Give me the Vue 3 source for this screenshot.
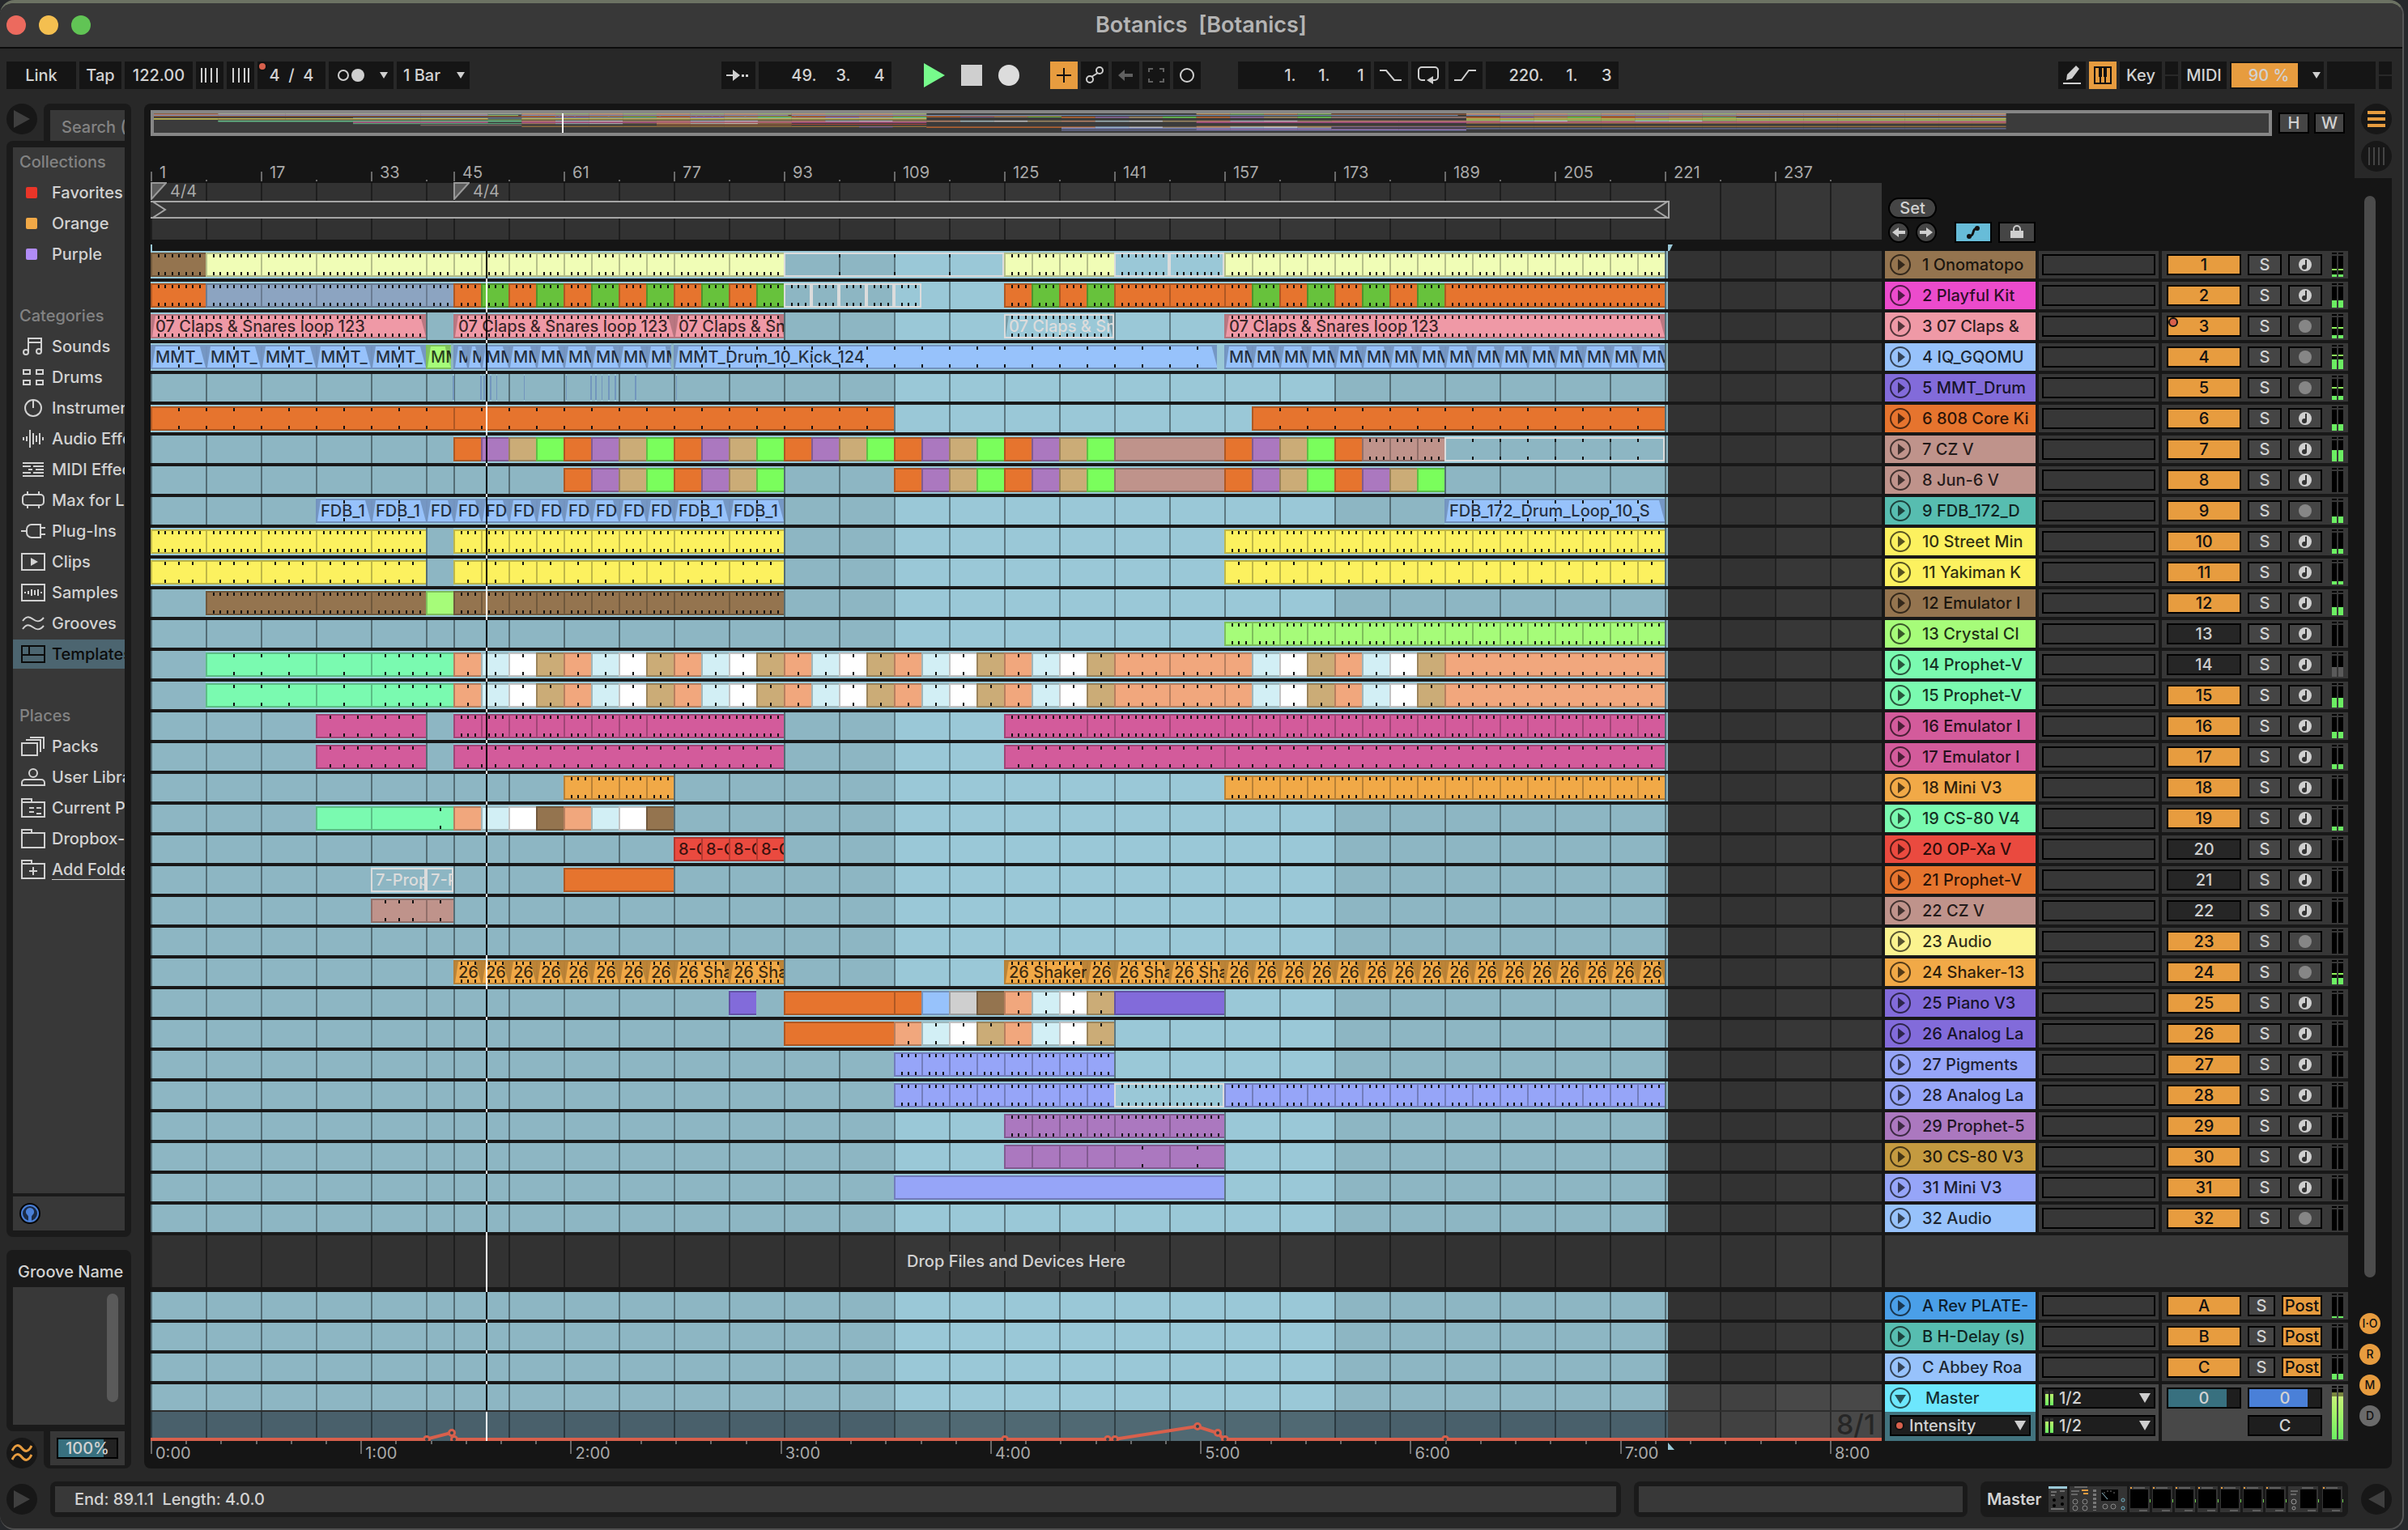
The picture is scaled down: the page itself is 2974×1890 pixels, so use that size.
<template>
  <div class="window">
    <header class="titlebar">
      <div class="lights">
        <span class="light red"></span>
        <span class="light amber"></span>
        <span class="light green"></span>
      </div>
      <h1>Botanics&nbsp; [Botanics]</h1>
    </header>

    <!-- Control bar -->
    <div class="toolbar">
      <div class="group">
        <button class="box w86">Link</button>
        <button class="box w52">Tap</button>
        <input class="box w84" value="122.00" aria-label="Tempo">
        <button class="box w34" aria-label="Nudge down">
          <svg width="24" height="18"><path class="line" d="M2 0v18M7 0v18M14 0v18M21 0v18" /></svg>
        </button>
        <button class="box w34" aria-label="Nudge up">
          <svg width="24" height="18"><path class="line" d="M3 0v18M10 0v18M17 0v18M22 0v18" /></svg>
        </button>
        <button class="box w84 signature"><span class="auto-dot"></span>4&nbsp; /&nbsp; 4</button>
        <button class="box w80" aria-label="Metronome">
          <svg width="68" height="20">
            <circle class="line" cx="12" cy="10" r="6" />
            <circle class="solid" cx="30" cy="10" r="8" />
            <path class="solid" d="M57 6h10l-5 8z" />
          </svg>
        </button>
        <span class="select-wrap w90">
          <select class="box" aria-label="Quantization"><option>1 Bar</option></select>
          <svg width="10" height="8"><path class="solid" d="M0 0h10l-5 8z" /></svg>
        </span>
      </div>
      <div class="space-a"></div>
      <div class="group">
        <button class="box w42" aria-label="Follow">
          <svg width="30" height="20"><path class="solid" d="M0 9h8V3l9 7-9 7v-6H0zM19 9h3v3h-3zM24 9h3v3h-3z" /></svg>
        </button>
        <div class="box position">
          <input v-for="(part, i) in ['49.', '3.', '4']" :key="i" :value="part" aria-label="Arrangement position">
        </div>
      </div>
      <div class="group transport">
        <button aria-label="Play"><svg width="26" height="30"><path fill="#77fb8c" d="M0 0l26 15L0 30z" /></svg></button>
        <button aria-label="Stop"><svg width="26" height="26"><path class="solid" d="M0 0h26v26H0z" /></svg></button>
        <button aria-label="Record"><svg width="26" height="26"><circle cx="13" cy="13" r="13" fill="#dcdcdc" /></svg></button>
      </div>
      <div class="group">
        <button class="box w34 on" aria-label="Overdub"><svg width="18" height="18"><path d="M9 0v18M0 9h18" stroke="#111" stroke-width="2" /></svg></button>
        <button class="box w34" aria-label="Automation arm"><svg width="24" height="24"><path class="line" d="M8 14l8-5" /><circle class="line" cx="6" cy="17" r="4" /><circle class="line" cx="18" cy="6" r="4" /></svg></button>
        <button class="box w34" aria-label="Re-enable automation"><svg width="18" height="16"><path d="M0 8l8-7v5h10v4H8v5z" fill="#606060" /></svg></button>
        <button class="box w34" aria-label="Capture"><svg width="20" height="20"><path d="M1 6V2h5M14 2h5v4M19 14v4h-5M6 18H1v-4" fill="none" stroke="#606060" stroke-width="2" /></svg></button>
        <button class="box w34" aria-label="Session record"><svg width="20" height="20"><circle class="line" cx="10" cy="10" r="8" /></svg></button>
      </div>
      <div class="group loop-group">
        <div class="box position">
          <input v-for="(part, i) in ['1.', '1.', '1']" :key="i" :value="part" aria-label="Loop start">
        </div>
        <button class="box w42" aria-label="Punch in"><svg width="28" height="16"><path class="line" d="M0 2h8l10 12h9" /></svg></button>
        <button class="box w42" aria-label="Loop"><svg width="28" height="24"><path class="line" d="M10 18H6a4 4 0 0 1-4-4V6a4 4 0 0 1 4-4h16a4 4 0 0 1 4 4v8a4 4 0 0 1-4 4h-4" /><path class="solid" d="M12 18l8-5v10z" /></svg></button>
        <button class="box w42" aria-label="Punch out"><svg width="28" height="16"><path class="line" d="M0 14h9L18 2h9" /></svg></button>
        <div class="box position">
          <input v-for="(part, i) in ['220.', '1.', '3']" :key="i" :value="part" aria-label="Loop length">
        </div>
      </div>
      <div class="space-b"></div>
      <div class="group">
        <button class="box w34" aria-label="Draw mode"><svg width="24" height="24"><path class="solid" d="M5 18l1-7L17 0l4 4-9 12zM1 21h22v2H1z" /></svg></button>
        <button class="box w34 on" aria-label="Computer keyboard">
          <svg width="24" height="24"><path d="M2 2h20v20H2zM9 13v9M15 13v9" fill="none" stroke="#111" stroke-width="2" /><path d="M7 2h4v12H7zM13 2h4v12h-4z" fill="#111" /></svg>
        </button>
        <button class="box w52">Key</button>
        <span class="box w16 split"></span>
        <button class="box w56">MIDI</button>
        <button class="box cpu"><span>90 %</span><svg width="10" height="8"><path class="solid" d="M0 0h10l-5 8z" /></svg></button>
        <span class="box w60"></span>
        <span class="box w16 split"></span>
      </div>
    </div>

    <div class="body">
      <!-- Browser -->
      <aside class="sidebar">
        <div class="browser-top">
          <button class="round" aria-label="Toggle browser"><svg width="24" height="24"><path d="M2 1l20 11L2 23z" fill="#3f3f3f" /></svg></button>
          <div class="search"><input type="text" placeholder="Search (Cmd + F)" aria-label="Search"></div>
        </div>
        <nav class="browser">
          <div class="browser-list">
            <template v-for="section in sections" :key="section.title">
              <h2>{{ section.title }}</h2>
              <ul>
                <li v-for="item in section.items" :key="item.label">
                  <button :class="{ selected: item.selected, underline: item.add }">
                    <span v-if="item.color" class="swatch" :style="{ background: item.color }"></span>
                    <svg v-else width="30" height="24">
                      <path :d="icons[item.icon]" fill="none" stroke="currentColor" stroke-width="2" />
                      <path v-if="item.icon === 'clips'" d="M12 7l9 5-9 5z" fill="currentColor" />
                    </svg>
                    <span class="item-label">{{ item.label }}</span>
                  </button>
                </li>
              </ul>
            </template>
          </div>
          <div class="browser-foot">
            <button aria-label="Preview">
              <svg width="26" height="26"><circle cx="13" cy="13" r="13" fill="#060606" /><circle cx="13" cy="13" r="10" fill="#1b2b45" stroke="#4a80d8" stroke-width="2" /><path d="M13 6a5 5 0 0 1 5 6c0 2-3 3-3 5v6h-4v-6c0-2-3-3-3-5a5 5 0 0 1 5-6z" fill="#4a80d8" /></svg>
            </button>
          </div>
        </nav>
        <section class="groove">
          <h2>Groove Name</h2>
          <div class="groove-list"><span class="groove-scroll"></span></div>
        </section>
        <div class="groove-foot">
          <button class="round" aria-label="Groove pool">
            <svg width="26" height="26"><path d="M1 10c4-8 8-8 12-3s8 5 12-3M1 21c4-8 8-8 12-3s8 5 12-3" fill="none" stroke="#e79c3f" stroke-width="3" /></svg>
          </button>
          <div class="amount"><button>100%</button></div>
        </div>
      </aside>

      <!-- Arrangement -->
      <main class="deck">
        <div class="switcher">
          <button class="round" aria-label="Arrangement view"><svg width="22" height="20"><path d="M0 0h22v4H0zM0 8h22v4H0zM0 16h22v4H0z" fill="#e79c3f" /></svg></button>
          <button class="round" aria-label="Session view"><svg width="22" height="22"><path d="M2 0v22M8 0v22M14 0v22M20 0v22" stroke="#444" stroke-width="2" /></svg></button>
        </div>

        <div class="overview-row">
          <div class="overview">
            <svg :viewBox="`0 0 ${TOTAL} 35`" preserveAspectRatio="none">
              <template v-for="(track, t) in tracks" :key="t">
                <rect v-for="(clip, c) in track.clips.filter(k => !k.ghost)" :key="c" :x="clip.start - 1" :y="t" :width="clip.end - clip.start" height="1.2" :fill="clip.color" />
              </template>
            </svg>
            <span class="overview-head" :style="{ left: pct(PLAYHEAD) }"></span>
          </div>
          <button class="small-box">H</button>
          <button class="small-box">W</button>
        </div>

        <div class="top">
          <div class="top-ruler">
            <div class="numbers">
              <span v-for="b in minorBars" :key="'m' + b" class="minor" :style="{ left: pct(b - 1) }"></span>
              <span v-for="b in rulerBars" :key="b" class="major" :style="{ left: pct(b - 1) }"><em>{{ b }}</em></span>
            </div>
            <div class="scrub" :style="{ background: darkShade }">
              <svg class="grid" :viewBox="`0 0 ${TOTAL} 10`" preserveAspectRatio="none"><path :d="gridPath" class="grid-dark" /></svg>
              <span v-for="b in [1, 45]" :key="b" class="time-sig" :style="{ left: pct(b - 1) }">
                <svg width="20" height="22"><path d="M1 1h18L1 21z" fill="#5c5c5c" stroke="#999" stroke-width="2" /></svg>4/4
              </span>
              <div class="loop" :style="{ width: pct(220.7) }">
                <svg width="20" height="22"><path d="M1 0l17 11L1 22" /></svg>
                <svg width="20" height="22"><path d="M19 0L2 11l17 11z" /></svg>
              </div>
            </div>
            <div class="insert">
              <span class="insert-start"></span>
              <svg width="6" height="8" :style="{ left: pct(220.5) }"><path d="M0 0h6l-4 8H0z" fill="#9ac8d7" /></svg>
            </div>
          </div>
          <div class="set-tools">
            <button class="pill">Set</button>
            <div>
              <button class="mini-round" aria-label="Previous locator"><svg width="16" height="14"><path class="solid" d="M0 7l8-6v4h8v4H8v4z" /></svg></button>
              <button class="mini-round" aria-label="Next locator"><svg width="16" height="14"><path class="solid" d="M16 7L8 1v4H0v4h8v4z" /></svg></button>
              <button class="tool automation" aria-label="Automation mode"><svg width="18" height="18"><path d="M4 14C12 13 6 5 14 4" fill="none" stroke="#111" stroke-width="3" /><circle cx="4" cy="14" r="3" fill="#111" /><circle cx="14" cy="4" r="3" fill="#111" /></svg></button>
              <button class="tool" aria-label="Lock envelopes"><svg width="16" height="18"><path d="M4 8V5a4 4 0 0 1 8 0v3" fill="none" stroke="#ccc" stroke-width="2" /><path class="solid" d="M0 7h16v9H0z" /></svg></button>
            </div>
          </div>
        </div>

        <div class="rows">
          <div class="playhead-track"><span class="head-line" :style="{ left: pct(PLAYHEAD) }"></span></div>

          <div v-for="(track, t) in tracks" :key="t" class="row">
            <div class="lane" :style="{ background: blueShade }">
              <svg class="grid" :viewBox="`0 0 ${TOTAL} 10`" preserveAspectRatio="none"><path :d="gridPath" /></svg>
              <div
                v-for="(clip, c) in track.clips"
                :key="c"
                class="clip"
                :class="{ ghost: clip.ghost, fades: clip.fades, sliver: clip.sliver }"
                :style="{ left: pct(clip.start - 1), width: pct(clip.end - clip.start), backgroundColor: clip.color }"
              ><span v-if="clip.label">{{ clip.label }}</span></div>
              <svg class="ticks" :viewBox="`0 0 ${TOTAL} 30`" preserveAspectRatio="none"><path :d="tickPath(track.clips)" /></svg>
              <span class="head-line" :class="{ black: !track.lightHead }" :style="{ left: pct(PLAYHEAD) }"></span>
            </div>
            <div class="name" :style="{ background: track.color }">
              <button class="fold" aria-label="Unfold track"><svg width="26" height="26"><circle cx="13" cy="13" r="12" /><path d="M10 6l9 7-9 7z" /></svg></button>
              <span>{{ t + 1 }} {{ track.name }}</span>
            </div>
            <div class="io"><span class="slot"></span></div>
            <div class="mix">
              <button class="activator" :class="{ off: track.off }">{{ t + 1 }}<i v-if="t === 2" class="auto-dot"></i></button>
              <button class="square">S</button>
              <button class="square" aria-label="Arm">
                <svg width="16" height="16">
                  <circle cx="8" cy="8" r="8" :fill="track.audio ? '#868686' : '#cfcfcf'" />
                  <path v-if="!track.audio" d="M9 2v9" stroke="#333" stroke-width="2" /><circle v-if="!track.audio" cx="7" cy="11" r="3" fill="#333" />
                </svg>
              </button>
              <span class="meters">
                <i v-for="ch in 2" :key="ch"><b :class="{ dim: track.off }" :style="{ height: track.level + 'px' }"></b><u v-if="track.peak" :style="{ bottom: track.peak + 'px' }"></u></i>
              </span>
            </div>
          </div>

          <div class="row drop">
            <div class="lane" :style="{ background: darkShade }">
              <svg class="grid" :viewBox="`0 0 ${TOTAL} 10`" preserveAspectRatio="none"><path :d="gridPath" class="grid-dark" /></svg>
              <span class="head-line" :style="{ left: pct(PLAYHEAD) }"></span>
              <p>Drop Files and Devices Here</p>
            </div>
            <div class="drop-side"></div>
          </div>

          <div v-for="ret in returns" :key="ret.key" class="row">
            <div class="lane" :style="{ background: blueShade }">
              <svg class="grid" :viewBox="`0 0 ${TOTAL} 10`" preserveAspectRatio="none"><path :d="gridPath" /></svg>
              <span class="head-line black" :style="{ left: pct(PLAYHEAD) }"></span>
            </div>
            <div class="name" :style="{ background: ret.color }">
              <button class="fold" aria-label="Unfold track"><svg width="26" height="26"><circle cx="13" cy="13" r="12" /><path d="M10 6l9 7-9 7z" /></svg></button>
              <span>{{ ret.key }} {{ ret.name }}</span>
            </div>
            <div class="io"><span class="slot"></span></div>
            <div class="mix">
              <button class="activator">{{ ret.key }}</button>
              <button class="square narrow">S</button>
              <button class="square post">Post</button>
              <span class="meters"><i v-for="ch in 2" :key="ch"><b :style="{ height: ret.level + 'px' }"></b></i></span>
            </div>
          </div>

          <div class="row master">
            <div class="lane">
              <div class="master-top" :style="{ background: masterShade }">
                <svg class="grid" :viewBox="`0 0 ${TOTAL} 10`" preserveAspectRatio="none"><path :d="gridPath" /></svg>
                <span class="head-line black" :style="{ left: pct(PLAYHEAD) }"></span>
              </div>
              <div class="automation-lane" :style="{ background: autoShade }">
                <svg class="grid" :viewBox="`0 0 ${TOTAL} 10`" preserveAspectRatio="none"><path :d="gridPath" /></svg>
                <svg class="envelope" :viewBox="`0 0 ${TOTAL} 36`" preserveAspectRatio="none"><path :d="autoPath" /></svg>
                <span v-for="(p, i) in autoPoints" :key="i" class="node" :style="{ left: pct(p[0]), top: p[1] + 'px' }"></span>
                <span class="head-line" :style="{ left: pct(PLAYHEAD) }"></span>
                <span class="grid-size">8/1</span>
              </div>
            </div>
            <div class="master-name">
              <div class="name">
                <button class="fold" aria-label="Fold track"><svg width="26" height="26"><circle cx="13" cy="13" r="12" /><path d="M6 9h14l-7 11z" /></svg></button>
                <span>Master</span>
              </div>
              <label class="chooser">
                <i class="auto-dot"></i>
                <select aria-label="Automated parameter"><option>Intensity</option></select>
                <svg width="14" height="12"><path class="solid" d="M0 0h14L7 12z" /></svg>
              </label>
            </div>
            <div class="io">
              <label v-for="n in 2" :key="n" class="chooser">
                <i class="io-level"></i><i class="io-level"></i>
                <select aria-label="Output"><option>1/2</option></select>
                <svg width="14" height="12"><path class="solid" d="M0 0h14L7 12z" /></svg>
              </label>
            </div>
            <div class="mix">
              <div class="values">
                <button class="value teal">0</button>
                <button class="value blue">0</button>
                <button class="value cue">C</button>
              </div>
              <span class="meters"><i v-for="ch in 2" :key="ch"><b class="hot"></b></i></span>
            </div>
          </div>
        </div>

        <div class="time-axis">
          <span v-for="n in 49" :key="n" class="sec" :style="{ left: pct((n - 1) * 30.5 / 6) }"></span>
          <span v-for="n in 9" :key="'l' + n" class="minute" :style="{ left: pct((n - 1) * 30.5) }"><em>{{ n - 1 }}:00</em></span>
          <svg width="8" height="9" :style="{ left: pct(220.5) }"><path d="M0 0l8 9H0z" fill="#9ac8d7" /></svg>
        </div>

        <div class="rail">
          <span class="rail-thumb"></span>
          <div class="rail-buttons">
            <button>I·O</button>
            <button>R</button>
            <button>M</button>
            <button class="off">D</button>
          </div>
        </div>
      </main>
    </div>

    <!-- Status bar -->
    <footer class="status">
      <button class="round" aria-label="Toggle help"><svg width="24" height="24"><path d="M2 1l20 11L2 23z" fill="#3f3f3f" /></svg></button>
      <div class="status-text"><span>End: 89.1.1&nbsp; Length: 4.0.0</span></div>
      <div class="status-mid"><span></span></div>
      <div class="chain">
        <span>Master</span>
        <svg width="364" height="32">
          <rect width="23" height="32" fill="#343434" /><rect width="23" height="3" fill="#9ac8d7" />
          <path d="M3 7h7M14 6h6M3 11h5M3 28h16" stroke="#aaa" /><circle cx="7" cy="17" r="2" /><circle cx="17" cy="14" r="2" /><circle cx="7" cy="24" r="2" /><circle cx="17" cy="22" r="2" />
          <rect x="26" width="71" height="32" fill="#343434" />
          <path d="M28 6h10M28 10h8M32 1h16" stroke="#999" /><path d="M41 5h8M43 9h6" stroke="#e79c3f" stroke-width="2" />
          <path d="M57 4v26" stroke="#777" stroke-width="4" stroke-dasharray="3 2" />
          <rect x="65" y="4" width="21" height="14" fill="#000" /><path d="M66 8l7 8" stroke="#9ac8d7" /><path d="M68 8h2M72 6h2M76 6h2M80 8h2" stroke="#777" />
          <g fill="none" stroke="#888"><circle cx="33" cy="19" r="3" /><circle cx="45" cy="19" r="3" /><circle cx="33" cy="27" r="3" /><circle cx="45" cy="27" r="3" /><circle cx="70" cy="25" r="3" /><circle cx="80" cy="25" r="3" /></g>
          <g fill="none" stroke="#6fb2c6"><circle cx="92" cy="17" r="2" /><circle cx="92" cy="27" r="2" /></g>
          <g v-for="x in [100, 128, 156, 184, 212, 240, 268, 308, 338]" :key="x">
            <rect :x="x" width="25" height="32" fill="#343434" />
            <rect :x="x + 1" y="4" width="22" height="23" fill="#000" />
            <rect :x="x + 1" y="1" width="2" height="2" fill="#e79c3f" />
            <path :d="`M${x + 5} 2h14M${x + 12} 30h10`" stroke="#888" />
            <rect :x="x + 25" y="16" width="1" height="4" fill="#6fd04c" />
          </g>
          <rect x="296" width="15" height="32" fill="#343434" /><path d="M299 6h9M299 10h7" stroke="#999" /><circle cx="303" cy="19" r="3" fill="none" stroke="#999" /><circle cx="303" cy="27" r="2" fill="none" stroke="#999" />
        </svg>
      </div>
      <button class="round last" aria-label="Toggle device view"><svg width="24" height="24"><path d="M22 1L2 12l20 11z" fill="#3f3f3f" /></svg></button>
    </footer>
  </div>
</template>

<script setup>
// Visible width of the timeline, in bars
const TOTAL = 251.53
const PLAYHEAD = 48.75

const pct = (bars) => (bars / TOTAL) * 100 + '%'

const C = {
  brown: '#94744f',
  cream: '#f0fdb6',
  orange: '#e6742e',
  slate: '#8ca4c1',
  green: '#67c23c',
  pink: '#ef99a6',
  blue: '#97c2fb',
  lime: '#a6fc79',
  purple: '#ab78bf',
  tan: '#cbac77',
  neon: '#7afe5c',
  rose: '#bf938b',
  yellow: '#fcf15f',
  mint: '#7afab0',
  peach: '#f1a77d',
  pale: '#d2eff5',
  white: '#ffffff',
  magenta: '#d35b9b',
  amber: '#f1a947',
  red: '#ea4a3f',
  violet: '#826bda',
  peri: '#96a5f8',
  grey: '#cfcfcf',
  teal: '#57bdb0'
}

// Splits start..end into clips of `step` bars, going round the list of colors
const run = (start, end, step, colors, opts = {}) => {
  const list = []
  for (let b = start, i = 0; b < end; b += step, i++) {
    list.push({ start: b, end: Math.min(b + step, end), color: colors[i % colors.length], ...opts })
  }
  return list
}
const one = (start, end, color, opts = {}) => ({ start, end, color, ...opts })
const ghost = (start, end, opts = {}) => ({ start, end, color: 'transparent', ghost: true, ...opts })

const d1 = { tick: 1 }
const d2 = { tick: 2 }
const d4 = { tick: 4 }
const synth = [C.orange, C.purple, C.tan, C.neon]
const chords = [C.peach, C.pale, C.white, C.tan]
const snare = (label = '07 Claps & Snares loop 123') => ({ tick: 1, fades: true, label })
const mmt = (label = 'MM') => ({ fades: true, label })
const fdb = (label) => ({ tick: 4, fades: true, label })
const shaker = (label) => ({ tick: 1, fades: true, label })

const hat = (color, opts) => [
  ...run(1, 41, 8, [color], opts),
  ...run(45, 77, 4, [color], opts),
  ...run(77, 93, 8, [color], opts),
  ...run(157, 221, 4, [color], opts)
]

const prophet = () => [
  one(9, 25, C.mint, d4), one(25, 33, C.mint, d4), one(33, 45, C.mint, d2),
  ...run(45, 141, 4, chords, d2),
  ...run(141, 157, 8, [C.peach], d2),
  ...run(157, 189, 4, chords, d2),
  one(189, 221, C.peach, d2)
]

const tracks = [
  { name: 'Onomatopo', color: C.brown, level: 3, peak: 8, clips: [
    one(1, 9, C.brown, d1), ...run(9, 41, 8, [C.cream], d1), ...run(41, 77, 4, [C.cream], d1), ...run(77, 93, 8, [C.cream], d1),
    ghost(93, 125, { tick: 8 }), ...run(125, 141, 4, [C.cream], d1), ghost(141, 149, d1), ghost(149, 157, d1), ...run(157, 221, 4, [C.cream], d1)
  ] },
  { name: 'Playful Kit', color: '#ec4bcc', level: 9, lightHead: true, clips: [
    one(1, 9, C.orange, d1), ...run(9, 45, 8, [C.slate], d1), ...run(45, 93, 4, [C.orange, C.green], d1),
    ...[93, 97, 101, 105, 109].map(b => ghost(b, b + 4, d1)),
    ...run(125, 141, 4, [C.orange, C.green], d1), ...run(141, 157, 8, [C.orange], d1),
    ...run(157, 189, 4, [C.orange, C.green], d1), one(189, 221, C.orange, d1)
  ] },
  { name: '07 Claps &', color: C.pink, audio: true, level: 4, peak: 12, clips: [
    one(1, 41, C.pink, snare()), one(45, 77, C.pink, snare()), one(77, 93, C.pink, snare('07 Claps & Sn')),
    ghost(125, 141, snare('07 Claps & Sn')), one(157, 221, C.pink, snare())
  ] },
  { name: 'IQ_GQOMU', color: C.blue, audio: true, level: 12, peak: 16, clips: [
    ...run(1, 41, 8, [C.blue], { ...mmt('MMT_'), tick: 4 }), one(41, 44.6, C.lime, mmt()),
    one(45, 47, C.blue, mmt('M')), one(47, 49, C.blue, mmt('M')), ...run(49, 73, 4, [C.blue], mmt()), one(73, 76.6, C.blue, mmt()),
    one(77, 156, C.blue, { ...mmt('MMT_Drum_10_Kick_124'), tick: 4 }), ...run(157, 221, 4, [C.blue], mmt())
  ] },
  { name: 'MMT_Drum', color: C.violet, audio: true, level: 5, peak: 14, clips:
    [44.9, 48.9, 49.4, 50.3, 51.2, 55.2, 61.3, 64.9, 65.6, 66.5, 67.5, 68.4, 71.4, 77.3].map(b => one(b, b + 0.2, '#7296bd', { sliver: true }))
  },
  { name: '808 Core Ki', color: C.orange, level: 8, lightHead: true, clips: [
    one(1, 45, C.orange, d4), one(45, 109, C.orange, d4), one(161, 221, C.orange, d4)
  ] },
  { name: 'CZ V', color: C.rose, level: 14, clips: [
    ...run(45, 141, 4, synth), one(141, 157, C.rose), ...run(157, 177, 4, synth), ...run(177, 189, 4, [C.rose], d1), ghost(189, 221, d4)
  ] },
  { name: 'Jun-6 V', color: C.rose, level: 0, clips: [
    ...run(61, 93, 4, synth), ...run(109, 141, 4, synth), one(141, 157, C.rose), ...run(157, 189, 4, synth)
  ] },
  { name: 'FDB_172_D', color: C.teal, audio: true, level: 8, clips: [
    ...run(25, 41, 8, [C.blue], fdb('FDB_1')), ...run(41, 77, 4, [C.blue], fdb('FD')), ...run(77, 93, 8, [C.blue], fdb('FDB_1')),
    one(189, 221, C.blue, fdb('FDB_172_Drum_Loop_10_S'))
  ] },
  { name: 'Street Min', color: C.yellow, level: 6, clips: hat(C.yellow, d1) },
  { name: 'Yakiman K', color: C.yellow, level: 4, clips: hat(C.yellow, d2) },
  { name: 'Emulator I', color: C.brown, level: 10, lightHead: true, clips: [
    one(9, 25, C.brown, d1), ...run(25, 41, 8, [C.brown], d1), one(41, 45, C.lime), ...run(45, 77, 4, [C.brown], d1), ...run(77, 93, 8, [C.brown], d1)
  ] },
  { name: 'Crystal Cl', color: C.lime, off: true, level: 0, clips: run(157, 221, 4, [C.lime], d1) },
  { name: 'Prophet-V', color: C.mint, off: true, level: 12, clips: prophet() },
  { name: 'Prophet-V', color: C.mint, level: 12, clips: prophet() },
  { name: 'Emulator I', color: C.magenta, level: 8, clips: [
    one(25, 41, C.magenta, d2), ...run(45, 73, 4, [C.magenta], d1), one(73, 93, C.magenta, d1),
    one(125, 137, C.magenta, d1), one(137, 141, C.magenta, d1), ...run(141, 157, 8, [C.magenta], d1), ...run(157, 221, 4, [C.magenta], d1)
  ] },
  { name: 'Emulator I', color: C.magenta, level: 6, clips: [
    one(25, 41, C.magenta, d2), one(45, 93, C.magenta, d2), one(125, 157, C.magenta, d2), one(157, 221, C.magenta, d2)
  ] },
  { name: 'Mini V3', color: C.amber, level: 0, clips: [...run(61, 77, 4, [C.amber], d1), ...run(157, 221, 4, [C.amber], d1)] },
  { name: 'CS-80 V4', color: C.mint, level: 5, clips: [
    one(25, 33, C.mint), one(33, 45, C.mint, { only: 43 }), ...run(45, 77, 4, [C.peach, C.pale, C.white, C.brown])
  ] },
  { name: 'OP-Xa V', color: C.red, off: true, level: 0, clips: run(77, 93, 4, [C.red], { label: '8-O' }) },
  { name: 'Prophet-V', color: C.orange, off: true, level: 0, clips: [
    ghost(33, 41, { label: '7-Prop' }), ghost(41, 45, { label: '7-P' }), one(61, 77, C.orange)
  ] },
  { name: 'CZ V', color: C.rose, off: true, level: 0, clips: [one(33, 41, C.rose, d2), one(41, 45, C.rose, d2)] },
  { name: 'Audio', color: '#fbf38f', audio: true, level: 0, clips: [] },
  { name: 'Shaker-13', color: C.amber, audio: true, level: 8, peak: 12, lightHead: true, clips: [
    ...run(45, 77, 4, [C.amber], shaker('26')), ...run(77, 93, 8, [C.amber], shaker('26 Sha')),
    one(125, 137, C.amber, shaker('26 Shaker')), one(137, 141, C.amber, shaker('26')),
    ...run(141, 157, 8, [C.amber], shaker('26 Sha')), ...run(157, 221, 4, [C.amber], shaker('26'))
  ] },
  { name: 'Piano V3', color: C.violet, level: 0, clips: [
    one(85, 89, C.violet), one(93, 109, C.orange), ...run(109, 125, 4, [C.orange, C.blue, C.grey, C.brown]), ...run(125, 141, 4, chords, d2), one(141, 157, C.violet)
  ] },
  { name: 'Analog La', color: C.violet, level: 0, clips: [one(93, 109, C.orange), ...run(109, 141, 4, chords, d2)] },
  { name: 'Pigments', color: C.peri, level: 0, clips: run(109, 141, 4, [C.peri], d1) },
  { name: 'Analog La', color: C.peri, level: 0, clips: [...run(109, 141, 4, [C.peri], d1), ghost(141, 157, d1), ...run(157, 221, 4, [C.peri], d1)] },
  { name: 'Prophet-5', color: C.purple, level: 0, clips: [...run(125, 141, 4, [C.purple], d1), ...run(141, 157, 8, [C.purple], d1)] },
  { name: 'CS-80 V3', color: '#c49a40', level: 0, clips: [...run(125, 141, 4, [C.purple], d4), ...run(141, 157, 8, [C.purple], d4)] },
  { name: 'Mini V3', color: C.peri, level: 0, clips: [one(109, 157, C.peri)] },
  { name: 'Audio', color: C.blue, audio: true, level: 0, clips: [] }
]

const returns = [
  { key: 'A', name: 'Rev PLATE-', color: '#4a9fe8', level: 2 },
  { key: 'B', name: 'H-Delay (s)', color: C.teal, level: 0 },
  { key: 'C', name: 'Abbey Roa', color: C.blue, level: 7 }
]

const sections = [
  { title: 'Collections', items: [
    { label: 'Favorites', color: '#ea3528' },
    { label: 'Orange', color: C.amber },
    { label: 'Purple', color: '#b18cf7' }
  ] },
  { title: 'Categories', items: [
    { label: 'Sounds', icon: 'sounds' },
    { label: 'Drums', icon: 'drums' },
    { label: 'Instruments', icon: 'dial' },
    { label: 'Audio Effects', icon: 'audio' },
    { label: 'MIDI Effects', icon: 'midi' },
    { label: 'Max for Live', icon: 'max' },
    { label: 'Plug-Ins', icon: 'plug' },
    { label: 'Clips', icon: 'clips' },
    { label: 'Samples', icon: 'samples' },
    { label: 'Grooves', icon: 'grooves' },
    { label: 'Templates', icon: 'templates', selected: true }
  ] },
  { title: 'Places', items: [
    { label: 'Packs', icon: 'packs' },
    { label: 'User Library', icon: 'user' },
    { label: 'Current Project', icon: 'project' },
    { label: 'Dropbox-Live', icon: 'folder' },
    { label: 'Add Folder...', icon: 'add', add: true }
  ] }
]

const icons = {
  sounds: 'M9 19V2h16v16M9 7h16M9 19a3 3 0 1 1-6 0a3 3 0 1 1 6 0M25 18a3 3 0 1 1-6 0a3 3 0 1 1 6 0',
  drums: 'M3 3h8v5H3zM19 3h8v5h-8zM3 16h8v5H3zM19 16h8v5h-8z',
  dial: 'M25 12a10 10 0 1 1-20 0a10 10 0 1 1 20 0M15 12V2',
  audio: 'M3 10v4M7 9v6M11 1v22M15 5v14M19 8v8M23 5v14M27 10v4',
  midi: 'M2 4h26M2 8h10M15 8h13M9 12h5M18 12h10M2 16h10M15 16h13M2 20h26',
  max: 'M6 5h18a4 4 0 0 1 4 4v5a4 4 0 0 1-4 4H6a4 4 0 0 1-4-4V9a4 4 0 0 1 4-4zM8 1v4M22 1v4M8 18v4M22 18v4',
  plug: 'M24 4v16H13a6 6 0 0 1-6-6v-4a6 6 0 0 1 6-6zM0 12h7M24 8h6M24 16h6',
  clips: 'M1 2h28v20H1z',
  samples: 'M1 2h28v20H1zM5 11v2M9 10v4M13 8v8M17 9v6M21 8v8M25 11v2',
  grooves: 'M2 9c5-7 9-5 13-2s8 4 13-2M2 19c5-7 9-5 13-2s8 4 13-2',
  templates: 'M1 2h28v20H1zM1 13h28M10 2v11',
  packs: 'M1 8h19v15H1zM6 4h18v15M11 1h17v14',
  user: 'M20 7a5 5 0 1 1-10 0a5 5 0 1 1 10 0M1 22v-3a4 4 0 0 1 4-4h20a4 4 0 0 1 4 4v3z',
  project: 'M1 23V1h12v4h16v18zM1 5h12M10 12h6M10 17h6M19 12h6M19 19h6',
  folder: 'M1 23V1h12v4h16v18zM1 5h12',
  add: 'M1 23V1h12v4h16v18zM1 5h12M15 9v10M10 14h10'
}

// Ruler: the meter change at bar 45 restarts the 8-bar grid
const gridBars = [1, 9, 17, 25, 33, 41]
for (let b = 45; b < 252; b += 8) gridBars.push(b)
const rulerBars = [1, 17, 33]
for (let b = 45; b <= 237; b += 16) rulerBars.push(b)
const minorBars = gridBars.filter(b => !rulerBars.includes(b))
const gridPath = gridBars.map(b => `M${b - 0.88} 0v10`).join('')

const tickPath = (clips) => {
  let d = ''
  clips.forEach(clip => {
    const mark = (b) => { d += `M${(b - 0.88).toFixed(2)} 2v4m0 18v4` }
    if (clip.only) mark(clip.only)
    if (!clip.tick) return
    for (let b = clip.start + clip.tick; b < clip.end; b += clip.tick) mark(b)
  })
  return d
}

const shade = (a, b, c, d) => `linear-gradient(90deg, ${a} 0 ${pct(108)}, ${b} 0 ${pct(172)}, ${a} 0 ${pct(220.5)}, ${c} 0 ${pct(236)}, ${d} 0)`
const blueShade = shade('#8db6c3', '#9ac8d7', '#323232', '#373737')
const darkShade = shade('#323232', '#373737', '#323232', '#373737')
const masterShade = shade('#8db6c3', '#9ac8d7', '#414141', '#484848')
const autoShade = shade('#49606b', '#506973', '#414141', '#484848')

const autoPoints = [[40, 34], [43.6, 26], [44, 34], [124, 34], [139, 34], [140, 34], [152, 18], [155, 26], [156, 34], [188, 34]]
const autoPath = 'M0 34L' + autoPoints.map(p => p.join(' ')).join('L') + `L${TOTAL} 34`
</script>

<style>
html,
body {
  background: #26282b;
}
</style>

<style scoped>
* {
  box-sizing: border-box;
}

.window {
  display: flex;
  flex-direction: column;
  min-height: 100vh;
  margin-right: 5px;
  background: #282828;
  border-top: 4px solid #6c7263;
  border-bottom: 2px solid #4f4f4f;
  border-right: 2px solid #555;
  border-radius: 18px;
  overflow: hidden;
  color: #d2d2d2;
  font-family: Inter, "Liberation Sans", sans-serif;
  font-size: 20px;
  font-weight: 500;
  line-height: 24px;
}

button,
input,
select {
  margin: 0;
  padding: 0;
  border: 0;
  border-radius: 0;
  background: none;
  color: inherit;
  font: inherit;
  outline: none;
}

select {
  appearance: none;
}

svg {
  display: block;
  flex: none;
}

h1,
h2,
p,
ul {
  margin: 0;
  padding: 0;
  font: inherit;
  list-style: none;
}

em {
  font-style: normal;
}

.line {
  fill: none;
  stroke: #cfcfcf;
  stroke-width: 2;
}

.solid {
  fill: #cfcfcf;
}

/* Title bar */
.titlebar {
  position: relative;
  display: flex;
  align-items: center;
  justify-content: center;
  height: 56px;
  background: #383838;
  border-bottom: 2px solid #0c0c0c;
}

.titlebar h1 {
  font-size: 27px;
  font-weight: 600;
  color: #b4b4b4;
}

.lights {
  position: absolute;
  left: 8px;
  display: flex;
  gap: 16px;
}

.light {
  width: 24px;
  height: 24px;
  border-radius: 50%;
}

.red { background: #ec6a5e; }
.amber { background: #f4bf50; }
.green { background: #61c455; }

/* Control bar */
.toolbar {
  display: flex;
  padding: 16px 13px 18px 8px;
}

.group {
  display: flex;
  gap: 4px;
}

.space-a { flex: 4; }
.space-b { flex: 7; }

.box {
  display: flex;
  align-items: center;
  justify-content: center;
  height: 34px;
  background: #151515;
  text-align: center;
}

.box.on { background: #e79c3f; }

.w16 { width: 16px; }
.w34 { width: 34px; }
.w42 { width: 42px; }
.w52 { width: 52px; }
.w56 { width: 56px; }
.w60 { width: 60px; }
.w80 { width: 80px; }
.w84 { width: 84px; }
.w86 { width: 86px; }
.w90 { width: 90px; }

.signature,
.activator {
  position: relative;
}

.auto-dot {
  flex: none;
  width: 12px;
  height: 12px;
  border: 2px solid #111;
  border-radius: 50%;
  background: #d8604c;
}

.signature .auto-dot,
.activator .auto-dot {
  position: absolute;
  top: 0;
  left: 0;
}

.select-wrap {
  position: relative;
}

.select-wrap select {
  width: 100%;
  padding-left: 8px;
  text-align: left;
}

.select-wrap svg {
  position: absolute;
  top: 13px;
  right: 6px;
}

.position {
  width: 164px;
  padding-right: 8px;
}

.position input {
  flex: none;
  width: 42px;
  text-align: right;
}

.position input:first-child {
  flex: 1;
  min-width: 0;
}

.transport {
  align-items: center;
  gap: 20px;
  margin: 0 38px 0 40px;
}

.loop-group {
  margin-left: 46px;
}

.split {
  background: linear-gradient(#151515 0 16px, #282828 0 18px, #151515 0);
}

.cpu {
  width: 116px;
  gap: 18px;
  justify-content: flex-start;
  padding-left: 2px;
}

.cpu span {
  width: 82px;
  padding: 3px 0 3px 10px;
  background: #e79c3f;
}

/* Body */
.body {
  display: flex;
  flex: 1;
  gap: 16px;
  padding: 0 13px 0 8px;
}

.round {
  display: flex;
  flex: none;
  align-items: center;
  justify-content: center;
  width: 38px;
  height: 38px;
  border-radius: 50%;
  background: #171717;
}

.sidebar {
  display: flex;
  flex-direction: column;
  width: 154px;
}

.browser-top,
.groove-foot {
  display: flex;
  justify-content: space-between;
}

.search,
.amount {
  width: 108px;
  height: 46px;
  padding: 8px 8px 0;
  border-radius: 8px 8px 0 0;
  background: #1a1a1a;
}

.search input {
  width: 92px;
  height: 42px;
  padding-left: 14px;
  background: #383838;
}

.search input::placeholder {
  color: #838383;
}

.browser {
  display: flex;
  flex: 1;
  flex-direction: column;
  gap: 4px;
  padding: 8px;
  border-radius: 8px 0 8px 8px;
  background: #1a1a1a;
}

.browser-list {
  flex: 1;
  background: #383838;
}

.browser-list h2 {
  height: 38px;
  padding: 6px 8px;
  color: #838383;
}

.browser-list ul {
  margin-bottom: 38px;
}

.browser-list li {
  height: 38px;
}

.browser-list button {
  display: flex;
  align-items: center;
  width: 138px;
  height: 36px;
  padding-left: 10px;
  overflow: hidden;
  white-space: nowrap;
}

.browser-list .selected {
  background: #4c6570;
  color: #0b0b0b;
}

.swatch {
  flex: none;
  width: 14px;
  height: 14px;
  margin: 0 10px 0 6px;
  border-radius: 2px;
}

.item-label {
  margin-left: 8px;
}

.underline .item-label {
  border-bottom: 1px solid #cfcfcf;
}

.browser-foot {
  height: 42px;
  padding: 8px;
  background: #383838;
}

.groove {
  margin-top: 16px;
  padding: 0 8px 8px;
  border-radius: 8px 8px 0 8px;
  background: #1a1a1a;
}

.groove h2 {
  height: 46px;
  padding: 15px 0 0 6px;
  overflow: hidden;
  white-space: nowrap;
}

.groove-list {
  display: flex;
  justify-content: flex-end;
  height: 170px;
  padding: 8px;
  background: #383838;
}

.groove-scroll {
  width: 14px;
  height: 134px;
  border-radius: 7px;
  background: #5a5a5a;
}

.groove-foot {
  align-items: flex-end;
}

.amount {
  padding: 0 8px 8px;
  border-radius: 0 0 8px 8px;
}

.amount button {
  width: 92px;
  height: 42px;
  border: 8px solid #383838;
  outline: 2px solid #000;
  outline-offset: -10px;
  background: linear-gradient(90deg, #38707f 0 76%, #222 0);
}

/* Arrangement */
.deck {
  position: relative;
  flex: 1;
  padding: 8px 54px 0 8px;
  border-radius: 8px;
  background: #151515;
}

.switcher {
  position: absolute;
  top: 0;
  right: 0;
  display: flex;
  flex-direction: column;
  gap: 8px;
  width: 46px;
  height: 92px;
  padding-left: 8px;
  background: #282828;
}

.overview-row {
  display: flex;
  align-items: center;
  gap: 6px;
  margin-right: 4px;
}

.overview {
  position: relative;
  flex: 1;
  height: 32px;
  margin-right: 2px;
  padding: 4px 0;
  background: #3b3b3b;
}

.overview::after {
  content: "";
  position: absolute;
  inset: 0;
  border: 4px solid #868686;
}

.overview svg {
  width: 100%;
  height: 24px;
  opacity: 0.8;
}

.overview-head {
  position: absolute;
  top: 4px;
  bottom: 4px;
  width: 2px;
  background: #fff;
}

.small-box {
  width: 38px;
  height: 26px;
  border: 2px solid #000;
  background: #454545;
  line-height: 20px;
}

.top {
  display: grid;
  grid-template-columns: 1fr 572px;
  gap: 4px;
}

.numbers {
  position: relative;
  height: 58px;
  color: #a9a9a9;
  font-weight: 400;
}

.major,
.minor {
  position: absolute;
  bottom: 2px;
  width: 2px;
  height: 2px;
  background: #6a6a6a;
}

.major {
  height: 12px;
}

.major em {
  position: absolute;
  bottom: -1px;
  left: 11px;
}

.scrub {
  position: relative;
  height: 70px;
  padding-top: 22px;
}

.time-sig {
  position: absolute;
  top: -2px;
  display: flex;
  align-items: center;
  gap: 4px;
  color: #a9a9a9;
  font-weight: 400;
}

.loop {
  position: relative;
  display: flex;
  justify-content: space-between;
  height: 22px;
  border: solid #a6a6a6;
  border-width: 2px 0;
  background: #373737;
}

.loop svg {
  margin-top: -2px;
}

.loop path {
  fill: none;
  stroke: #a6a6a6;
  stroke-width: 2;
}

.insert {
  position: relative;
  height: 14px;
}

.insert svg {
  position: absolute;
  top: 6px;
}

.insert-start {
  position: absolute;
  top: 6px;
  width: 2px;
  height: 8px;
  background: #9ac8d7;
}

.set-tools {
  padding: 76px 0 0 4px;
}

.set-tools > div {
  display: flex;
  align-items: center;
  margin-top: 4px;
}

.pill {
  display: block;
  width: 60px;
  height: 26px;
  border: 2px solid #000;
  border-radius: 13px;
  background: #454545;
  line-height: 22px;
}

.mini-round {
  display: flex;
  align-items: center;
  justify-content: center;
  width: 26px;
  height: 26px;
  margin-right: 8px;
  border: 2px solid #000;
  border-radius: 50%;
  background: #454545;
}

.tool {
  display: flex;
  align-items: center;
  justify-content: center;
  width: 46px;
  height: 26px;
  margin-right: 8px;
  border: 2px solid #000;
  background: #454545;
}

.tool.automation {
  margin-left: 14px;
  background: #67bcd8;
}

.rows {
  position: relative;
  background: #181818;
}

.playhead-track {
  position: absolute;
  inset: 0 576px 0 0;
}

.head-line {
  position: absolute;
  top: 0;
  bottom: 0;
  width: 2px;
  background: #fff;
}

.head-line.black {
  background: #000;
}

.row {
  display: grid;
  grid-template-columns: 1fr 186px 148px 230px;
  gap: 4px;
  height: 34px;
  margin-bottom: 4px;
}

.lane {
  position: relative;
  overflow: hidden;
}

.grid,
.ticks {
  position: absolute;
  top: 0;
  left: 0;
  width: 100%;
  height: 100%;
}

.ticks {
  top: 2px;
  height: 30px;
}

.grid path,
.ticks path {
  fill: none;
  stroke: rgba(0, 0, 0, 0.4);
  stroke-width: 2px;
  vector-effect: non-scaling-stroke;
  shape-rendering: crispEdges;
}

.grid .grid-dark {
  stroke: #1e1e1e;
}

.ticks path {
  stroke: #111;
}

.clip {
  position: absolute;
  top: 2px;
  height: 30px;
  border: 2px solid rgba(0, 0, 0, 0.24);
  border-right: 0;
  box-shadow: 0 2px 0 #9ac8d7, 0 -2px 0 #9ac8d7;
  overflow: hidden;
  color: rgba(0, 0, 0, 0.76);
  white-space: nowrap;
}

.clip span {
  position: relative;
  z-index: 1;
  display: block;
  padding-left: 4px;
  line-height: 26px;
}

.clip.ghost {
  border: 2px solid #dcdcdc;
  color: #dcdcdc;
}

.fades::before,
.fades::after {
  content: "";
  position: absolute;
  top: 0;
  bottom: 0;
  left: 0;
  width: 4px;
  background: rgba(0, 0, 0, 0.22);
  clip-path: polygon(0 0, 100% 0, 0 100%);
}

.fades::after {
  right: 0;
  left: auto;
  width: 7px;
  clip-path: polygon(0 0, 100% 0, 100% 100%);
}

.clip.sliver {
  border: 0;
}

.name {
  display: flex;
  align-items: center;
  gap: 14px;
  height: 34px;
  padding-left: 6px;
  overflow: hidden;
  color: rgba(0, 0, 0, 0.82);
  white-space: nowrap;
}

.fold circle {
  fill: none;
  stroke: rgba(0, 0, 0, 0.65);
  stroke-width: 2;
}

.fold path {
  fill: rgba(0, 0, 0, 0.65);
}

.io,
.mix {
  display: flex;
  align-items: flex-start;
  padding: 4px;
  background: #373737;
}

.slot {
  flex: 1;
  height: 26px;
  border: 2px solid #000;
}

.mix {
  position: relative;
  gap: 8px;
  padding-left: 6px;
}

.activator,
.square,
.value {
  height: 26px;
  border: 2px solid #000;
  line-height: 22px;
}

.activator {
  width: 92px;
  background: #e79c3f;
  color: #111;
}

.activator.off {
  background: #262626;
  color: #cfcfcf;
}

.square {
  display: flex;
  align-items: center;
  justify-content: center;
  width: 42px;
  background: #454545;
}

.square.narrow {
  width: 34px;
}

.square.post {
  width: 50px;
  background: #e79c3f;
  color: #111;
}

.meters {
  position: absolute;
  top: 2px;
  right: 6px;
  bottom: 2px;
  display: flex;
  gap: 2px;
}

.meters i {
  position: relative;
  display: flex;
  align-items: flex-end;
  width: 6px;
  background: linear-gradient(#000 0 2px, #373737 0 4px, #000 0);
}

.meters b {
  width: 6px;
  background: #6bee62;
}

.meters b.dim {
  background: #5a5a5a;
}

.meters u {
  position: absolute;
  left: 0;
  width: 6px;
  height: 2px;
  background: #8df55a;
}

.meters b.hot {
  height: 58px;
  background: linear-gradient(#78853f 0 5px, #c6f07a 0, #a9f36a 40%, #6bee62);
}

/* Drop area */
.drop {
  grid-template-columns: 1fr 572px;
  height: 64px;
  margin-bottom: 6px;
}

.drop .lane {
  display: flex;
  align-items: center;
  justify-content: center;
}

.drop p {
  position: relative;
  background: #373737;
}

.drop-side {
  background: #373737;
}

/* Master */
.master {
  height: 70px;
  margin-bottom: 0;
}

.master-top {
  position: relative;
  height: 32px;
}

.automation-lane {
  position: relative;
  height: 38px;
  border-top: 2px solid #2d2d2d;
  overflow: hidden;
}

.envelope {
  position: relative;
  width: 100%;
  height: 36px;
}

.envelope path {
  fill: none;
  stroke: #d8604c;
  stroke-width: 4px;
  vector-effect: non-scaling-stroke;
}

.node {
  position: absolute;
  width: 10px;
  height: 10px;
  margin: -5px 0 0 -4px;
  border: 3px solid #d8604c;
  border-radius: 50%;
  background: #34444c;
}

.grid-size {
  position: absolute;
  right: 8px;
  bottom: 2px;
  color: #262626;
  font-size: 34px;
  line-height: 36px;
}

.master-name {
  background: #42737e;
}

.master-name .name {
  gap: 18px;
  background: #6de7fd;
}

.chooser {
  display: flex;
  align-items: center;
  width: 140px;
  height: 26px;
  padding: 0 4px 0 2px;
  border: 2px solid #000;
  background: #1e1e1e;
}

.chooser select {
  flex: 1;
  min-width: 0;
  line-height: 22px;
}

.master-name .chooser {
  width: 174px;
  margin: 4px 6px 0;
}

.master-name .auto-dot {
  margin: 0 6px 0 2px;
}

.master .io {
  flex-direction: column;
  gap: 8px;
  background: #484848;
}

.io-level {
  width: 4px;
  height: 18px;
  margin-right: 2px;
  background: linear-gradient(#333 0 4px, #b9f06c 0, #6bee62);
}

.io-level + select {
  margin-left: 5px;
}

.master .mix {
  background: #484848;
}

.values {
  display: grid;
  grid-template-columns: 92px 92px;
  gap: 8px;
}

.value {
  background: #1e1e1e;
}

.teal { background: linear-gradient(90deg, #38707f 0 82%, #1e1e1e 0); }
.blue { background: linear-gradient(90deg, #4a80d8 0 82%, #1e1e1e 0); }

.cue {
  grid-column: 2;
}

/* Time axis */
.time-axis {
  position: relative;
  height: 34px;
  margin-right: 576px;
  color: #a9a9a9;
  font-weight: 400;
}

.time-axis svg {
  position: absolute;
  top: 2px;
}

.sec,
.minute {
  position: absolute;
  top: 0;
  width: 2px;
  height: 4px;
  background: #6a6a6a;
}

.minute {
  height: 16px;
}

.minute em {
  position: absolute;
  top: 3px;
  left: 6px;
}

.rail {
  position: absolute;
  top: 114px;
  right: 14px;
  bottom: 52px;
  display: flex;
  flex-direction: column;
  align-items: center;
  width: 26px;
}

.rail-thumb {
  flex: 1;
  width: 14px;
  margin-bottom: 44px;
  border-radius: 7px;
  background: #4c4c4c;
}

.rail-buttons {
  display: flex;
  flex-direction: column;
  gap: 12px;
}

.rail-buttons button {
  width: 26px;
  height: 26px;
  border-radius: 50%;
  background: #e79c3f;
  color: #111;
  font-size: 14px;
  line-height: 26px;
}

.rail-buttons .off {
  background: #6a6a6a;
}

/* Status bar */
.status {
  display: flex;
  align-items: center;
  padding: 16px 13px 14px 8px;
}

.status-text,
.status-mid,
.chain {
  height: 44px;
  padding: 6px;
  border-radius: 8px;
  background: #1a1a1a;
}

.status-text {
  flex: 1;
  margin: 0 16px;
}

.status-text span,
.status-mid span {
  display: block;
  height: 32px;
  padding-left: 24px;
  background: #383838;
  line-height: 32px;
}

.status-mid {
  width: 412px;
  margin-right: 16px;
}

.chain {
  display: flex;
  align-items: center;
  justify-content: space-between;
  width: 454px;
  padding-left: 8px;
}

.chain > span {
  font-weight: 600;
}

.status .last {
  margin-left: 16px;
}
</style>
